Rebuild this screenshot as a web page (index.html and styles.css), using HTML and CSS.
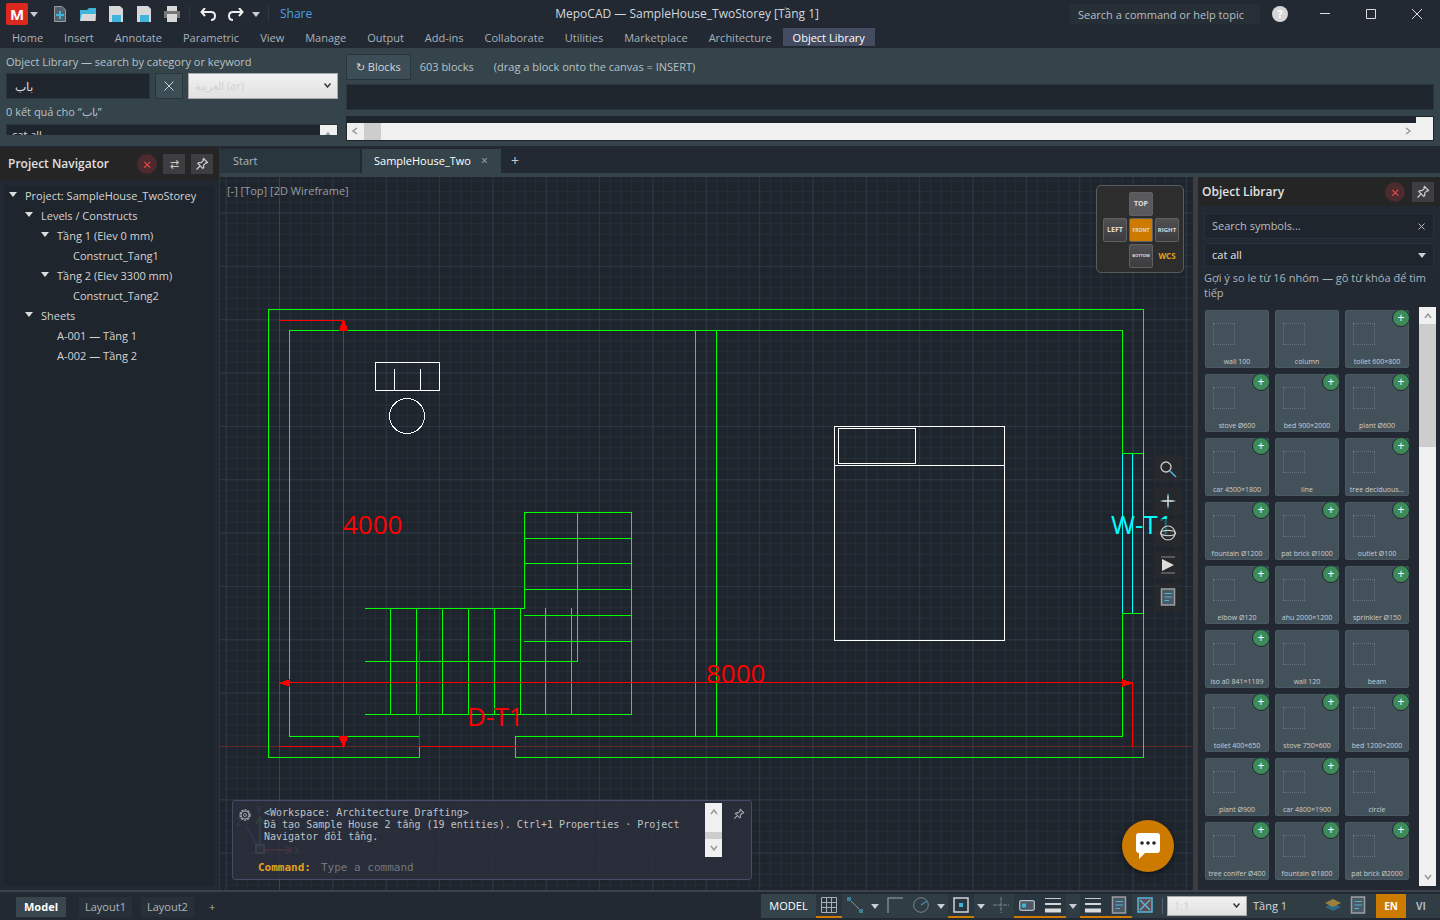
FILE: index.html
```html
<!DOCTYPE html>
<html lang="en">
<head>
<meta charset="utf-8">
<title>MepoCAD — SampleHouse_TwoStorey</title>
<link rel="stylesheet" href="styles.css">
</head>
<body>
<svg class="defs" aria-hidden="true">
  <symbol id="pin" viewBox="0 0 14 14"><path d="M8.5 1.5l4 4-1 .6-.7-.2-2.2 2.300.2 2.300-1 1L2.800 6.500l1-1 2.300.2 2.200-2.200-.3-1zM5 9L1.500 12.500" fill="none" stroke="currentColor" stroke-width="1.200"/></symbol>
  <symbol id="save" viewBox="0 0 14 16"><path d="M0 0h11l3 3v13H0z" fill="#d8d8d8"/><path d="M3 9h9v7H3z" fill="#3fb5dc"/></symbol>
  <symbol id="up" viewBox="0 0 8 6"><path d="M1 5l3-4 3 4" fill="none" stroke="currentColor" stroke-width="1.500"/></symbol>
  <symbol id="sheet" viewBox="0 0 16 18"><path d="M1.500 1h13v16h-13z" fill="#4a5964" stroke="#9a9fa3" stroke-width="1.500"/><path d="M4.500 5.500h7.500M4.500 9h7.500M4.500 12.500h4.500" stroke="#4fb3d9" stroke-width="1.200"/></symbol>
  <symbol id="weights" viewBox="0 0 16 16"><path d="M0 1.500h16" stroke="#c4c8ca"/><path d="M0 7h16" stroke="#d4d6d8" stroke-width="2"/><path d="M0 13.500h16" stroke="#d8dadb" stroke-width="4"/></symbol>
</svg>
<header class="titlebar">
  <div class="quick">
    <button class="logo">M</button><i class="tri"></i>
    <button class="ico new" aria-label="New"><svg width="12" height="16"><path d="M0 0h8l4 4v12H0z" fill="#52616a"/><path d="M.5 .5h7.500l3.500 3.500v11.500H.5z" fill="none" stroke="#969b9e"/><path d="M6 5v8M2 9h8" stroke="#3fb5dc" stroke-width="2"/></svg></button>
    <button class="ico open" aria-label="Open"><svg width="16" height="13"><path d="M0 2h7l2-2h7v13H0z" fill="#3fb5dc"/><path d="M2 6h14l-1 7H0z" fill="#d8d8d8"/></svg></button>
    <button class="ico save" aria-label="Save"><svg width="14" height="16"><use href="#save"/></svg></button>
    <button class="ico save" aria-label="Save as"><svg width="14" height="16"><use href="#save"/></svg></button>
    <button class="ico" aria-label="Print"><svg width="16" height="16"><path d="M3 0h10v5H3z" fill="#d8d8d8"/><path d="M0 5h16v7H0z" fill="#777"/><path d="M3 8h10v8H3z" fill="#d8d8d8"/></svg></button>
    <i class="vsep"></i>
    <button class="ico" aria-label="Undo"><svg width="16" height="13" fill="none" stroke="#eee" stroke-width="2"><path d="M5 0L1.500 4 5 8M2 4h9q4 0 4 4t-4 4"/></svg></button>
    <button class="ico redo" aria-label="Redo"><svg width="16" height="13" fill="none" stroke="#eee" stroke-width="2"><path d="M11 0l3.500 4L11 8M14 4H5Q1 4 1 8t4 4"/></svg></button>
    <i class="tri"></i><i class="vsep"></i>
    <a class="share" href="#">Share</a>
  </div>
  <div class="doc">MepoCAD — SampleHouse_TwoStorey [Tầng 1]</div>
  <div class="winside">
    <input class="help" aria-label="Search a command or help topic" placeholder="Search a command or help topic">
    <button class="q" aria-label="Help">?</button>
    <button class="win" aria-label="Minimize"><svg width="10" height="10"><path d="M0 4.500h10" stroke="#ddd"/></svg></button>
    <button class="win" aria-label="Maximize"><svg width="10" height="10"><path d="M.5 .5h9v9h-9z" fill="none" stroke="#ddd"/></svg></button>
    <button class="win" aria-label="Close"><svg width="10" height="10"><path d="M0 0l10 10M10 0L0 10" stroke="#ddd"/></svg></button>
  </div>
</header>
<nav class="menu">
  <a href="#">Home</a><a href="#">Insert</a><a href="#">Annotate</a><a href="#">Parametric</a><a href="#">View</a><a href="#">Manage</a><a href="#">Output</a><a href="#">Add-ins</a><a href="#">Collaborate</a><a href="#">Utilities</a><a href="#">Marketplace</a><a href="#">Architecture</a><a href="#" class="on">Object Library</a>
</nav>
<section class="ribbon">
  <div class="finder">
    <label for="kw">Object Library — search by category or keyword</label>
    <div class="row">
      <input id="kw" value="باب">
      <button aria-label="Clear"><svg width="10" height="10"><path d="M.5 .5l9 9M9.500 .5l-9 9" stroke="#ccd2d5"/></svg></button>
      <div class="sel light"><select aria-label="Language"><option>العربية (ar)</option></select><svg width="7" height="5"><path d="M.5 .5l3 3.500 3-3.500" fill="none" stroke="#333" stroke-width="1.500"/></svg></div>
    </div>
    <div class="found">0 kết quả cho “باب”</div>
    <div class="cats"><span>cat all</span><i class="sb"><svg width="8" height="6"><use href="#up"/></svg></i></div>
  </div>
  <div class="blocks">
    <div class="row"><button class="refresh">↻ Blocks</button><span class="count">603 blocks</span><span class="hint">(drag a block onto the canvas = INSERT)</span></div>
    <div class="strip"></div>
    <div class="hscroll"><i class="arrow l"><svg width="8" height="6"><use href="#up"/></svg></i><i class="thumb"></i><i class="arrow r"><svg width="8" height="6"><use href="#up"/></svg></i><i class="corner"></i></div>
  </div>
</section>
<main class="work">
  <aside class="nav">
    <div class="phead"><h2>Project Navigator</h2><button class="x">×</button><button class="sq">⇄</button><button class="sq" aria-label="Pin"><svg width="14" height="14"><use href="#pin"/></svg></button></div>
    <ul class="tree">
      <li class="d0"><i class="tri"></i>Project: SampleHouse_TwoStorey</li>
      <li class="d1"><i class="tri"></i>Levels / Constructs</li>
      <li class="d2"><i class="tri"></i>Tầng 1 (Elev 0 mm)</li>
      <li class="d3">Construct_Tang1</li>
      <li class="d2"><i class="tri"></i>Tầng 2 (Elev 3300 mm)</li>
      <li class="d3">Construct_Tang2</li>
      <li class="d1"><i class="tri"></i>Sheets</li>
      <li class="d2 leaf">A-001 — Tầng 1</li>
      <li class="d2 leaf">A-002 — Tầng 2</li>
    </ul>
  </aside>
  <div class="right">
    <div class="tabs"><button class="tab">Start</button><button class="tab on">SampleHouse_Two<span>×</span></button><button class="add">+</button></div>
    <div class="stage">
      <div class="canvas">
        <svg class="draw" width="100%" height="100%">
          <defs>
            <pattern id="minor" x="59" y="569" width="10.67" height="10.67" patternUnits="userSpaceOnUse"><path d="M.5 0v10.67M0 .5h10.67" stroke="#242e38"/></pattern>
            <pattern id="major" x="59" y="569" width="53.34" height="53.34" patternUnits="userSpaceOnUse"><path d="M.5 0v53.34M0 .5h53.34" stroke="#2d3646"/></pattern>
          </defs>
          <rect width="100%" height="100%" fill="url(#minor)"/>
          <rect width="100%" height="100%" fill="url(#major)"/>
          <g transform="translate(-220 -177)" fill="none" shape-rendering="crispEdges">
            <path d="M279.500 177v713" stroke="#28502f"/>
            <path d="M220 746.500h973" stroke="#602a2c"/>
            <g stroke="#0f0">
              <path d="M419.500 747v10.500h-151v-448h875v448h-628v-21h607v-406h-833v406h130"/>
              <path d="M695.500 330.500v406M716.500 330.500v406"/>
              <path d="M365 608.500h159.500v-96h107v202H365M365 661.500h212.500v-149M524 538.500h107M524 563.500h107M524 589.500h107M524 615.500h107M524 641.500h107M390.500 608v106M416.500 608v106M442.500 608v106M468.500 608v106M494.500 608v106M520.500 608v106M545.500 608v106M571.500 608v106"/>
            </g>
            <path stroke="#fff" d="M375.500 362.500h64v28h-64zM394.500 369v21M420.500 369v21M834.500 426.500h170v214h-170zM834.500 465.500h170M838.500 428.500h77v35h-77z"/>
            <circle cx="407" cy="416" r="17.500" stroke="#fff"/>
            <g stroke="#0ff"><path d="M1122.500 453v161M1132.500 453v161M1143.500 453v161"/><path stroke="#0f0" d="M1122 453.500h21M1122 613.500h21"/></g>
            <g stroke="#f00"><path d="M279 320.500h64.500v426H279.500v-64H1132.500v64M419.500 651v95.500h96"/><path fill="#f00" stroke="none" d="M343.500 319l5 12h-10zM343.500 748l5-12h-10zM279 683l11-4v8zM1133 683l-11-4v8z"/></g>
          </g>
          <g class="cadtext" transform="translate(-220 -177)">
            <text x="343" y="534" fill="#f00">4000</text><text x="706" y="683" fill="#f00">8000</text><text x="467" y="726" fill="#f00">D-T1</text><text x="1111" y="534" fill="#0ff">W-T1</text>
          </g>
          <g transform="translate(-220 -177)" fill="none" stroke-width="2">
            <path d="M260 850v-32m-4 6l4-7 4 7" stroke="#3c9c52"/><path d="M260 850h31m-6-4l7 4-7 4" stroke="#c03c46"/><path d="M260 850l-14-24" stroke="#405fae"/><path d="M256 845h8v8h-8z" stroke="#99a"/>
            <g class="axis"><text x="256" y="814">Y</text><text x="294" y="854">X</text><text x="236" y="826">Z</text></g>
          </g>
        </svg>
        <span class="viewlabel">[-] [Top] [2D Wireframe]</span>
        <div class="cube">
          <button class="top">TOP</button><button class="left">LEFT</button><button class="front">FRONT</button><button class="rgt">RIGHT</button><button class="bot">BOTTOM</button><span>WCS</span>
        </div>
        <div class="tools">
          <button aria-label="Zoom"><svg width="18" height="18" fill="none"><circle cx="7" cy="7" r="5" stroke="#ccc" stroke-width="1.300"/><path d="M11 11l6 6" stroke="#4fb3d9" stroke-width="1.600"/></svg></button>
          <button aria-label="Pan"><svg width="18" height="18"><path d="M9 1.500v15M1.500 9h15" stroke="#4fb3d9"/><path d="M9 3.500v11M3.500 9h11" stroke="#d8d8d8" stroke-width="1.300"/></svg></button>
          <button aria-label="Orbit"><svg width="18" height="18" fill="none" stroke="#ccc" stroke-width="1.200"><circle cx="9" cy="9" r="7"/><ellipse cx="9" cy="9" rx="7.500" ry="2.700"/></svg></button>
          <button aria-label="Play"><svg width="18" height="18"><path d="M2 1h14M2 17h14" stroke="#888"/><path d="M3 3l12 6-12 6z" fill="#ddd"/></svg></button>
          <button aria-label="Sheet"><svg width="16" height="18"><use href="#sheet"/></svg></button>
        </div>
        <div class="cmd">
          <svg class="gear" width="12" height="12" fill="none" stroke="#999fa8"><circle cx="6" cy="6" r="5" stroke-width="1.500" stroke-dasharray="2.200 1"/><circle cx="6" cy="6" r="4"/><circle cx="6" cy="6" r="1.500"/></svg>
          <div class="log"><p>&lt;Workspace: Architecture Drafting&gt;<br>Đã tạo Sample House 2 tầng (19 entities). Ctrl+1 Properties · Project Navigator đổi tầng.</p></div>
          <div class="vbar"><svg width="8" height="6"><use href="#up"/></svg><i></i><svg class="down" width="8" height="6"><use href="#up"/></svg></div>
          <svg class="cpin" width="12" height="12"><use href="#pin"/></svg>
          <div class="prompt"><label for="cmd">Command:</label><input id="cmd" placeholder="Type a command"></div>
        </div>
        <button class="chat" aria-label="Chat"><svg width="24" height="26"><path d="M3 0h18q3 0 3 3v14q0 3-3 3H9l-6 6v-6q-3 0-3-3V3q0-3 3-3z" fill="#fff"/><g fill="#20252c"><circle cx="6" cy="10" r="1.800"/><circle cx="12" cy="10" r="1.800"/><circle cx="18" cy="10" r="1.800"/></g></svg></button>
      </div>
      <aside class="lib">
        <div class="phead"><h2>Object Library</h2><button class="x">×</button><button class="sq" aria-label="Pin"><svg width="14" height="14"><use href="#pin"/></svg></button></div>
        <div class="libin">
          <div class="field"><input aria-label="Search symbols" placeholder="Search symbols..."><button aria-label="Clear"><svg width="7" height="7"><path d="M.5 .5l6 6M6.500 .5l-6 6" stroke="#bbb"/></svg></button></div>
          <div class="field cat"><select aria-label="Category"><option>cat all</option></select><i class="tri"></i></div>
          <p class="note">Gợi ý so le từ 16 nhóm — gõ từ khóa để tìm tiếp</p>
          <div class="gridwrap"><div class="cards" id="cards"></div><div class="vscroll"><svg width="8" height="6"><use href="#up"/></svg><i></i><svg class="down" width="8" height="6"><use href="#up"/></svg></div></div>
        </div>
      </aside>
    </div>
  </div>
</main>
<footer class="status">
  <div class="layouts"><button class="on">Model</button><button>Layout1</button><button>Layout2</button><button class="plus">+</button></div>
  <div class="bar">
    <button class="model">MODEL</button>
    <button class="c on" aria-label="Grid"><svg width="16" height="16" fill="none" stroke="#a9b0b4"><path d="M.5 .5h15v15H.5zM5.500 0v16M10.500 0v16M0 5.500h16M0 10.500h16"/></svg></button>
    <button class="c" aria-label="Snap"><svg width="16" height="16"><path d="M2 2l12 12" stroke="#8b9398"/><path d="M0 0h4v4H0zM12 12h4v4h-4z" fill="#3c8196"/></svg></button><button class="dd" aria-label="Snap options"><i class="tri"></i></button>
    <button class="c" aria-label="Ortho"><svg width="16" height="16"><path d="M1 16V1h15" fill="none" stroke="#7b868c" stroke-width="1.500"/></svg></button>
    <button class="c" aria-label="Polar"><svg width="16" height="16" fill="none"><circle cx="8" cy="8" r="7.300" stroke="#7b868c"/><path d="M8 8l6-4" stroke="#3c8ba6" stroke-width="1.500"/></svg></button><button class="dd" aria-label="Polar options"><i class="tri"></i></button>
    <button class="c on" aria-label="Object snap"><svg width="16" height="16"><path d="M1 1h14v14H1z" fill="none" stroke="#d0d3d5" stroke-width="1.500"/><path d="M6 6h4v4H6z" fill="#3fb5dc"/></svg></button><button class="dd" aria-label="Object snap options"><i class="tri"></i></button>
    <button class="c" aria-label="Tracking"><svg width="16" height="16"><path d="M8 0v16M0 8h16" stroke="#7b868c" stroke-dasharray="4 1"/></svg></button>
    <button class="c on" aria-label="Dynamic input"><svg width="16" height="16"><rect x=".7" y="3.700" width="14.600" height="9.600" rx="1.500" fill="#4a5964" stroke="#b8bdc0" stroke-width="1.300"/><path d="M3 6.500h4v4H3z" fill="#3fb5dc"/></svg></button>
    <button class="c on" aria-label="Lineweight"><svg width="16" height="16"><use href="#weights"/></svg></button><button class="dd" aria-label="Lineweight options"><i class="tri"></i></button>
    <button class="c on" aria-label="Transparency"><svg width="16" height="16"><use href="#weights"/></svg></button>
    <button class="c on" aria-label="Properties"><svg width="16" height="18"><use href="#sheet"/></svg></button>
    <button class="c" aria-label="Isolate"><svg width="16" height="16"><path d="M1 1h14v14H1z" fill="#624b50" stroke="#55b5dd" stroke-width="1.500"/><path d="M3 3l10 10M13 3L3 13" stroke="#55b5dd" stroke-width="1.500"/></svg></button>
    <i class="vsep"></i>
    <div class="sel light scale"><select aria-label="Scale"><option>1:1</option></select><svg width="7" height="5"><path d="M.5 .5l3 3.500 3-3.500" fill="none" stroke="#333" stroke-width="1.500"/></svg></div>
    <span class="level">Tầng 1</span>
    <button class="c layers" aria-label="Layers"><svg width="16" height="12"><path d="M0 8l8-4 8 4-8 4z" fill="#2f6884"/><path d="M0 4l8-4 8 4-8 4z" fill="#9d803c"/></svg></button>
    <button class="c" aria-label="Notes"><svg width="16" height="18"><use href="#sheet"/></svg></button>
    <button class="lang on">EN</button><button class="lang">VI</button>
  </div>
</footer>
<script src="cards.js"></script>
</body>
</html>
```
FILE: cards.js
```js
const symbols = [
  ["wall 100", 0], ["column", 0], ["toilet 600×800", 1],
  ["stove Ø600", 1], ["bed 900×2000", 1], ["plant Ø600", 1],
  ["car 4500×1800", 1], ["line", 0], ["tree deciduous...", 1],
  ["fountain Ø1200", 1], ["pat brick Ø1000", 1], ["outlet Ø100", 1],
  ["elbow Ø120", 1], ["ahu 2000×1200", 1], ["sprinkler Ø150", 1],
  ["iso a0 841×1189", 1], ["wall 120", 0], ["beam", 0],
  ["toilet 400×650", 1], ["stove 750×600", 1], ["bed 1200×2000", 1],
  ["plant Ø900", 1], ["car 4800×1900", 1], ["circle", 0],
  ["tree conifer Ø400", 1], ["fountain Ø1800", 1], ["pat brick Ø2000", 1]
];
document.getElementById("cards").innerHTML = symbols.map(([name, add]) =>
  `<div class="card"><i class="thumbnail"></i><span>${name}</span>${add ? '<button class="plus" aria-label="Add">+</button>' : ""}</div>`
).join("");
```
FILE: styles.css
```css
* { box-sizing: border-box; }
body { margin: 0; height: 100vh; display: flex; flex-direction: column; overflow: hidden; background: #222933; color: #d4d8da; font: 12px/16px "Open Sans", "Noto Sans", sans-serif; }
button, input, select { font: inherit; color: inherit; background: none; border: 0; padding: 0; margin: 0; border-radius: 0; outline: 0; min-width: 0; }
button { display: flex; align-items: center; justify-content: center; flex: none; }
a { color: inherit; text-decoration: none; }
svg { display: block; flex: none; }
h2, p, ul { margin: 0; padding: 0; }
.defs { position: absolute; width: 0; height: 0; }
.tri { flex: none; width: 0; height: 0; border: 4px solid transparent; border-top: 5px solid #c9cdd0; border-bottom: 0; }
.vsep { flex: none; width: 1px; height: 16px; background: #3a444c; }
.row { display: flex; align-items: center; }

.titlebar { flex: none; height: 28px; display: flex; align-items: center; }
.quick { flex: none; display: flex; align-items: center; padding-left: 6px; }
.quick > .tri { margin: 0 2px; }
.logo { width: 22px; height: 22px; border-radius: 2px; background: #dc281e; color: #fff; font: bold 15px/20px "Open Sans", sans-serif; }
.ico { width: 28px; height: 24px; }
.new { margin-left: 6px; }
.quick .vsep { margin: 0 4px 0 3px; background: #2e383f; }
.share { color: #4a9fe0; margin-left: 11px; font-size: 12px; }
.quick .tri + .vsep { margin-left: 6px; margin-right: 0; }
.doc { flex: 1; text-align: center; white-space: nowrap; padding-right: 8px; }
.winside { flex: none; display: flex; align-items: center; justify-content: flex-end; }
.help { width: 190px; height: 20px; padding: 0 8px; background: #262f36; font-size: 11px; }
input::placeholder { color: #b8bec2; opacity: 1; }
.q { width: 16px; height: 16px; margin: 0 14px 0 12px; border-radius: 50%; background: #d6d6d6; color: #fff; font-size: 11px; font-weight: 700; }
.win { width: 46px; height: 28px; }

.menu { flex: none; height: 20px; display: flex; gap: 1px; padding-left: 2px; color: #aab2b8; font-size: 11px; }
.menu a { padding: 0 10px; line-height: 19px; height: 18px; white-space: nowrap; }
.menu .on { background: #434c61; color: #fff; }

.ribbon { flex: none; height: 99px; display: flex; gap: 8px; padding: 6px; background: #35434a; border-bottom: 1px solid #222933; }
.finder { flex: none; width: 332px; height: 81px; overflow: hidden; color: #b8c2c6; font-size: 11px; }
.finder label { display: block; height: 19px; }
.finder .row { gap: 5px; }
.finder input { width: 144px; height: 26px; padding: 0 8px; background: #1f252c; border: 1px solid #29353b; font-size: 12px; color: #ddd; }
.finder .row button { width: 28px; height: 26px; background: #3d4d56; border: 1px solid #29353b; }
.sel { position: relative; display: flex; }
.sel select { width: 100%; height: 100%; appearance: none; padding: 0 6px; color: #d2d2d2; font-size: 11px; }
.sel svg { position: absolute; right: 6px; top: 9px; }
.light { flex: 1; height: 26px; background: linear-gradient(#f1f1f1, #e1e1e1); border: 1px solid #a9a9a9; }
.found { height: 24px; padding-top: 3px; line-height: 20px; }
.cats { height: 30px; margin-top: 1px; display: flex; background: #1f252c; border: 1px solid #29353b; color: #ddd; line-height: 20px; }
.cats span { flex: 1; padding-left: 5px; }
.sb { width: 17px; padding: 7px 4px; background: #f0f0f0; color: #999; }
.blocks { flex: 1; min-width: 0; font-size: 11px; }
.refresh { height: 26px; padding: 0 9px; background: #3d4d56; border: 1px solid #29353b; }
.count { margin-left: 9px; color: #b8c2c6; }
.hint { margin-left: 20px; color: #b8c2c6; }
.strip { height: 26px; margin-top: 4px; background: #1f252c; border: 1px solid #29353b; }
.hscroll { position: relative; height: 25px; margin-top: 6px; display: flex; padding: 7px 1px 1px; background: #1f252c; }
.hscroll i { height: 17px; background: #f0f0f0; color: #999; }
.arrow { width: 17px; padding: 5px 4px; }
.hscroll .r { flex: 1; display: flex; justify-content: flex-end; }
.l svg { transform: rotate(-90deg); }
.r svg { transform: rotate(90deg); }
.hscroll .thumb { width: 17px; background: #cdcdcd; }
.hscroll .corner { width: 17px; height: 23px; margin-top: -6px; }

.work { flex: 1; min-height: 0; display: flex; }
.nav { flex: none; width: 220px; background: #222933; border-right: 1px solid #2c363e; }
.phead { height: 32px; display: flex; align-items: center; gap: 6px; padding: 0 6px 0 8px; background: #252526; color: #e0e0e0; }
.phead h2 { flex: 1; font-size: 12px; line-height: 16px; font-weight: 600; }
.nav .phead { height: 33px; }
.x { width: 20px; height: 20px; border-radius: 50%; background: #4b2b2e; color: #ef4a4a; font-size: 15px; }
.sq { width: 22px; height: 20px; background: #3e3e42; color: #ccc; font-size: 11px; }
.tree { list-style: none; margin: 5px 4px; padding: 1px 0; height: calc(100% - 42px); background: #1f252c; color: #d4d4d4; font-size: 11px; }
.tree li { display: flex; height: 20px; line-height: 20px; white-space: nowrap; }
.tree .tri { margin: 6px 8px 0 0; border-top-color: #ddd; }
.d0 { padding-left: 5px; } .d1 { padding-left: 21px; } .d2 { padding-left: 37px; } .d2.leaf { padding-left: 53px; } .d3 { padding-left: 69px; }

.right { flex: 1; min-width: 0; display: flex; flex-direction: column; }
.tabs { flex: none; height: 30px; display: flex; padding-top: 2px; background: #222933; border-bottom: 4px solid #35434a; font-size: 11px; }
.tab { width: 142px; justify-content: flex-start; padding-left: 13px; background: #2a363e; color: #aeb6ba; border-right: 2px solid #222933; height: 24px; }
.tab.on { width: 139px; padding-left: 12px; background: #35434a; color: #fff; gap: 10px; border: 0; }
.tab span { font-size: 12px; color: #aaa; }
.add { width: 28px; font-size: 14px; color: #ccc; }
.stage { flex: 1; min-height: 0; display: flex; }
.canvas { position: relative; flex: 1; min-width: 0; background: #1f252c; overflow: hidden; }
.draw { position: absolute; inset: 0; }
.cadtext { font: 26px "Open Sans", sans-serif; }
.axis { font: 10px "Open Sans", sans-serif; fill: #889; }
.viewlabel { position: absolute; left: 7px; top: 6px; font-size: 11px; color: #989ea6; }
.cube { position: absolute; right: 9px; top: 8px; width: 88px; height: 88px; padding: 6px 5px 4px 6px; display: grid; grid-template: repeat(3, 24px) / repeat(3, 24px); gap: 2px; border: 1px solid #5a5b5c; border-radius: 5px; background: #2d2d2d; color: #ddd; }
.cube button { border: 1px solid #606060; border-radius: 2px; background: linear-gradient(#505052, #3c3c3e); font-size: 7px; line-height: 8px; font-weight: 700; }
.cube .top { grid-area: 1 / 2; background: #5a5a5c; }
.cube .left { grid-area: 2 / 1; }
.cube .front { grid-area: 2 / 2; background: #cc7a00; font-size: 5px; }
.cube .rgt { grid-area: 2 / 3; font-size: 6px; }
.cube .bot { grid-area: 3 / 2; font-size: 4px; }
.cube span { grid-area: 3 / 3; color: #e0a020; font-size: 8px; font-weight: 700; line-height: 24px; text-align: center; }
.tools { position: absolute; right: 11px; top: 278px; display: grid; gap: 4px; }
.tools button { width: 28px; height: 28px; border-radius: 3px; background: rgba(42, 42, 43, .7); }
.cmd { position: absolute; left: 12px; bottom: 10px; width: 520px; height: 80px; padding: 2px 8px 0 6px; border: 1px solid #454d66; border-radius: 3px; background: rgba(42, 47, 60, .85); display: grid; grid-template: 54px 1fr / 25px 1fr 17px 21px; font: 10px/12px "DejaVu Sans Mono", monospace; color: #bfc3c6; }
.gear { margin-top: 6px; }
.log { padding-top: 4px; padding-right: 16px; }
.vbar, .vscroll { width: 17px; background: #f0f0f0; color: #999; display: flex; flex-direction: column; align-items: center; padding: 6px 0; }
.vbar i { width: 17px; height: 8px; margin: 17px 0 6px; background: #cdcdcd; }
.down { transform: rotate(180deg); }
.cpin { margin: 5px 0 0 11px; color: #aab0b8; }
.prompt { grid-column: 1 / 5; display: flex; align-items: center; gap: 10px; padding-left: 19px; }
.prompt label { color: #e0a020; font-weight: 700; font-size: 11px; }
.prompt input { flex: 1; font-size: 11px; }
.prompt input::placeholder { color: #73777d; }
.chat { position: absolute; right: 19px; bottom: 18px; width: 52px; height: 52px; border-radius: 50%; background: #cc7a00; box-shadow: 0 2px 6px rgba(0, 0, 0, .5); }
.lib { flex: none; width: 247px; border-left: 5px solid #3e3e42; display: flex; flex-direction: column; background: #222933; }
.lib .phead { flex: none; height: 29px; padding-left: 4px; gap: 7px; }
.libin { flex: 1; min-height: 0; display: flex; flex-direction: column; padding: 7px 4px 4px 6px; }
.field { flex: none; display: flex; align-items: center; height: 26px; margin-right: 2px; padding: 0 8px 0 7px; background: #1f252c; border: 1px solid #27313a; }
.field input { flex: 1; font-size: 11px; }
.cat { margin-top: 4px; height: 24px; padding-right: 7px; }
.cat select { flex: 1; appearance: none; color: #e4e4e4; font-size: 11px; }
.note { margin: 3px 0 7px; font-size: 11px; line-height: 15px; color: #aab6bc; }
.gridwrap { flex: 1; min-height: 0; display: flex; }
.cards { flex: 1; height: 100%; overflow: hidden; display: grid; grid-template-columns: repeat(3, 64px); grid-auto-rows: 58px; gap: 6px; padding: 3px 1px; }
.card { position: relative; border-radius: 2px; background: #43525a; border: 1px solid #4a5a62; display: flex; flex-direction: column; justify-content: space-between; padding: 12px 1px 0 7px; }
.thumbnail { width: 22px; height: 22px; border: 1px dotted #66747c; }
.card span { margin-left: -6px; text-align: center; font-size: 7px; line-height: 10px; white-space: nowrap; color: #c8cdd0; }
.card .plus { position: absolute; right: -2px; top: -2px; width: 18px; height: 18px; border: 1px solid #222933; border-radius: 50%; background: #3d8b59; color: #fff; font-size: 12px; }
.vscroll > i { width: 17px; height: 123px; margin-top: 5px; background: #cdcdcd; }
.vscroll .down { margin-top: auto; }

.status { flex: none; height: 30px; display: flex; justify-content: space-between; border-top: 2px solid #3b4249; background: #222933; }
.layouts { display: flex; align-items: center; gap: 9px; padding-left: 16px; font-size: 11px; padding-top: 2px; }
.layouts button { height: 20px; padding: 0 6px; color: #aeb6ba; background: #273038; }
.layouts .on { padding: 0 8px; margin-right: 4px; background: #3a464e; color: #fff; font-weight: 700; }
.layouts .plus { background: none; }
.bar { display: flex; align-items: center; height: 24px; margin-top: 2px; background: #303d45; }
.model { width: 55px; height: 24px; background: #35434a; color: #fff; font-size: 11px; }
.c { width: 26px; height: 24px; border-bottom: 2px solid transparent; }
.c.on { background: #2a363f; border-bottom-color: #cc7a00; }
.dd { width: 14px; }
.bar > .vsep { margin: 0 4px; background: #59636b; }
.bar .scale { flex: none; width: 80px; height: 20px; }
.bar .sel svg { top: 6px; }
.level { width: 60px; margin: 0 7px 0 6px; font-size: 11px; white-space: nowrap; }
.layers { margin-right: -1px; }
.lang { width: 30px; height: 24px; color: #aeb9c4; font-weight: 700; font-size: 10px; }
.lang.on { margin-left: 5px; background: #cc7a00; color: #fff; }
.lang:last-child { margin-right: 4px; }
```
